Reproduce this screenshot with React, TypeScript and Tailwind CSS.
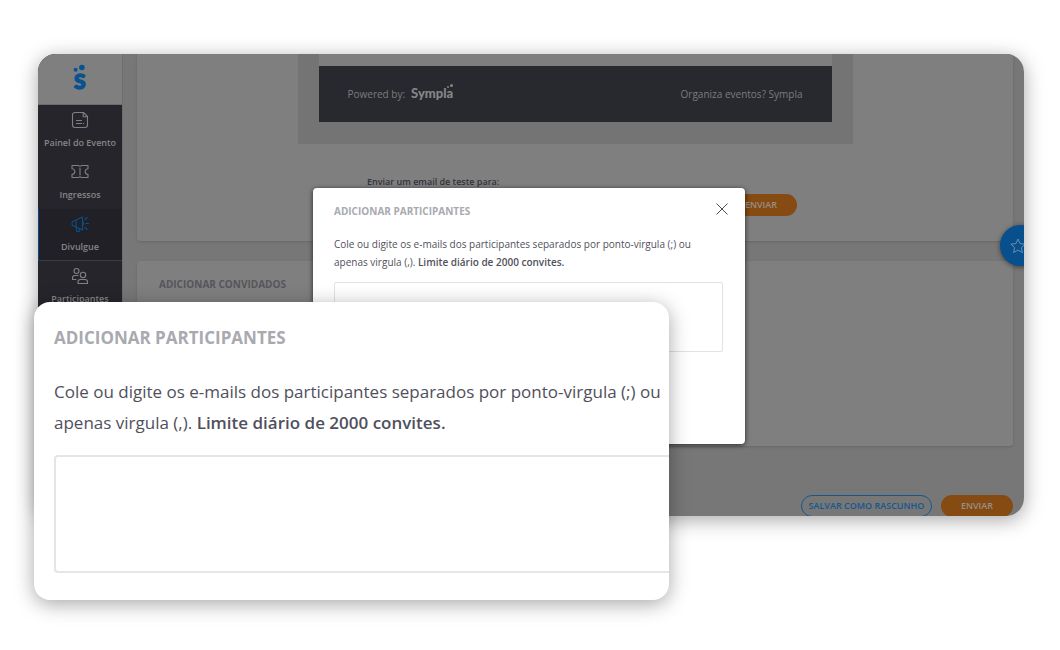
import React, { useState } from 'react'

interface NavItemProps {
  label: string
  active?: boolean
  children: React.ReactNode
}

const NavItem: React.FC<NavItemProps> = ({ label, active, children }) => (
  <li>
    <a
      href="#"
      className={
        active
          ? 'flex h-[52px] flex-col items-center gap-[7px] border-b border-b-[#3c3b3e] bg-[#212026] pt-[6px] text-[#858588] shadow-[inset_1px_0_0_#07477d]'
          : 'flex h-[52px] flex-col items-center gap-[7px] pt-[6px] text-[#858588]'
      }
    >
      <svg
        className={active ? 'h-[18px] w-[18px] text-[#0a4f8a]' : 'h-[18px] w-[18px] text-[#808083]'}
        viewBox="0 0 18 18"
        fill="none"
        stroke="currentColor"
        strokeWidth="1.1"
        strokeLinecap="round"
        strokeLinejoin="round"
      >
        {children}
      </svg>
      <span className="text-[9px] leading-[14px] font-semibold whitespace-nowrap">{label}</span>
    </a>
  </li>
)

const Sidebar: React.FC = () => (
  <aside className="w-[84px] shrink-0 bg-[#25252b]">
    <a href="#" aria-label="Sympla" className="flex h-[51px] justify-center border-b border-[#6c6c6d] bg-[#7f7f7f] pt-[9px]">
      <svg className="h-[30px] w-[20px] text-[#07528f]" viewBox="0 0 20 30" fill="currentColor">
        <circle cx="5.6" cy="6.8" r="2" />
        <circle cx="11.9" cy="4.5" r="2.8" />
        <text x="9.7" y="26" textAnchor="middle" fontFamily="Lato, sans-serif" fontWeight="900" fontSize="21" stroke="currentColor" strokeWidth="1.4">
          S
        </text>
      </svg>
    </a>
    <nav>
      <ul>
        <NavItem label="Painel do Evento">
          <path d="M12.5 1.5H4A2.5 2.5 0 0 0 1.5 4v10A2.5 2.5 0 0 0 4 16.5h10a2.5 2.5 0 0 0 2.5-2.5V5.5z" />
          <path d="M12.2 1.8v4h4M5.5 9.5h5M5.5 12.5h5M12.3 12.5h.4" />
        </NavItem>
        <NavItem label="Ingressos">
          <path d="M1 2.5h6.8q1.2 1.6 2.4 0H17v3.2a2.8 2.8 0 0 0 0 5.6v3.2h-6.8q-1.2-1.6-2.4 0H1v-3.2a2.8 2.8 0 0 0 0-5.6z" />
          <path d="M9 5v7" />
        </NavItem>
        <NavItem label="Divulgue" active>
          <path d="M1.5 6.5Q.5 8 1.5 10.5l2 .8 8 3.7V2l-8 3.8zM5 5.5v6.200M11.500 6.500q2 2 0 4" />
          <path d="M5 12l.8 4.500h2.400V13.500M14 4.500l2-2M14.800 8.500h2.700M14 12.500l2 2" />
        </NavItem>
        <NavItem label="Participantes">
          <circle cx="5.5" cy="4" r="2.5" />
          <circle cx="12" cy="8" r="2.7" />
          <path d="M1.5 12.5V11Q1.5 8.5 4 8.5h3M1.5 12.5H5M7 16.5V15q0-2.500 2.500-2.500H14q2.500 0 2.500 2.500v1.500z" />
        </NavItem>
      </ul>
    </nav>
  </aside>
)

const EmailFooter: React.FC = () => (
  <div className="mx-auto h-[90px] w-[555px] max-w-full bg-[#747474] px-[21px]">
    <div className="h-3 bg-[#7f7f7f]" />
    <div className="flex h-14 items-center justify-between bg-[#28292e] px-[29px] text-[10px] text-[#7b7b7e]">
      <span className="flex items-center gap-[6px]">
        Powered by:
        <span className="relative font-['Lato'] text-[13px] font-black text-[#858586]">
          Sympla
          <svg className="absolute -top-px right-0 h-[6px] w-[8px]" viewBox="0 0 8 6" fill="currentColor">
            <circle cx="3" cy="4" r="1" />
            <circle cx="6.5" cy="2.5" r="1.5" />
          </svg>
        </span>
      </span>
      <a href="#">Organiza eventos? Sympla</a>
    </div>
  </div>
)

const EventPage: React.FC = () => (
  <main className="min-w-0 flex-1 border-l border-[#6e6e6e] bg-[#777777] pr-[11px] pl-[14px]">
    <section className="h-[187px] rounded-b-[3px] bg-[#7f7f7f] shadow-sm">
      <EmailFooter />
      <form className="pt-[30px] pl-[230px]" onSubmit={e => e.preventDefault()}>
        <label htmlFor="test-email" className="block text-[9px] leading-4 font-semibold text-[#33333a]">
          Enviar um email de teste para:
        </label>
        <div className="mt-1 flex gap-3">
          <input id="test-email" type="email" className="h-[22px] w-[346px] rounded-[3px] border border-[#6c6c6c]" />
          <button type="submit" className="h-[22px] w-[72px] rounded-full bg-[#864a13] text-[9px] font-semibold text-[#979088]">
            ENVIAR
          </button>
        </div>
      </form>
    </section>

    <section className="mt-5 h-[185px] rounded-[3px] bg-[#7f7f7f] px-[22px] pt-[15px] shadow-sm">
      <h2 className="text-[10px] leading-4 font-bold text-[#56565b]">ADICIONAR CONVIDADOS</h2>
    </section>

    <div className="mt-[49px] flex justify-end gap-[9px]">
      <button type="button" className="h-[22px] w-[131px] rounded-full border border-[#15588f] text-[9px] font-semibold text-[#15588f]">
        SALVAR COMO RASCUNHO
      </button>
      <button type="button" className="h-[22px] w-[72px] rounded-full bg-[#864a13] text-[9px] font-semibold text-[#979088]">
        ENVIAR
      </button>
    </div>
  </main>
)

const Instructions: React.FC = () => (
  <>
    Cole ou digite os e-mails dos participantes separados por ponto-virgula (;) ou
    <br />
    apenas virgula (,). <strong className="font-semibold">Limite diário de 2000 convites.</strong>
  </>
)

const App: React.FC = () => {
  const [emails, setEmails] = useState('')
  const [open, setOpen] = useState(true)

  return (
    <div className="relative min-h-screen bg-white pt-[54px] pr-9 pb-[134px] pl-[38px] font-['Open_Sans',sans-serif]">
      <div className="relative flex h-[462px] overflow-hidden rounded-[18px] shadow-[0_4px_20px_rgba(0,0,0,0.35)]">
        <Sidebar />
        <EventPage />

        <button
          type="button"
          aria-label="Favoritos"
          className="absolute top-[171px] -right-[17px] flex h-[41px] w-[41px] items-center rounded-full bg-[#07508d] pl-[10px] text-[#6d8caa] shadow-[0_1px_5px_rgba(0,0,0,0.5)]"
        >
          <svg className="h-4 w-4" viewBox="0 0 16 16" fill="none" stroke="currentColor" strokeWidth="1" strokeLinejoin="round">
            <path d="M8 1l2.1 4.6 5 .6-3.7 3.4 1 5L8 12.1l-4.4 2.5 1-5L.9 6.2l5-.6z" />
          </svg>
        </button>

        {open && (
          <div
            role="dialog"
            aria-labelledby="dialog-title"
            className="absolute top-[134px] left-[275px] h-[256px] w-[432px] rounded-[4px] bg-white pt-[14px] pr-[22px] pl-[21px] shadow-[0_1px_5px_rgba(0,0,0,0.7)]"
          >
            <div className="flex items-start justify-between">
              <h2 id="dialog-title" className="text-[10px] leading-[18px] font-bold text-[#a9a9b0]">
                ADICIONAR PARTICIPANTES
              </h2>
              <button type="button" aria-label="Fechar" onClick={() => setOpen(false)} className="-mr-[6px]">
                <svg className="h-[14px] w-[14px]" viewBox="0 0 14 14" stroke="#4b4b50" strokeWidth="1">
                  <path d="M1.5 1.5l11 11M12.5 1.5l-11 11" />
                </svg>
              </button>
            </div>
            <label htmlFor="emails" className="mt-[15px] block text-[10px] leading-[18px] text-[#50505c]">
              <Instructions />
            </label>
            <textarea
              id="emails"
              value={emails}
              onChange={e => setEmails(e.target.value)}
              className="mt-[11px] block h-[70px] w-full resize-none rounded-[2px] border border-[#e2e2e2] p-2 text-[10px]"
            />
          </div>
        )}
      </div>

      {/* Enlarged detail of the dialog */}
      <section className="absolute top-[302px] left-[34px] h-[298px] w-[635px] overflow-hidden rounded-[16px] bg-white pt-6 pl-5 shadow-[0_4px_20px_rgba(0,0,0,0.35)]">
        <h2 className="text-[17px] leading-6 font-bold text-[#a9a9b0]">ADICIONAR PARTICIPANTES</h2>
        <label htmlFor="emails-detail" className="mt-[26px] block text-[17px] leading-[31px] text-[#50505c]">
          <Instructions />
        </label>
        <textarea
          id="emails-detail"
          value={emails}
          onChange={e => setEmails(e.target.value)}
          className="mt-[17px] block h-[118px] w-full resize-none rounded-l-[4px] border-2 border-r-0 border-[#e5e5e5] p-3 text-[17px]"
        />
      </section>
    </div>
  )
}

export default App
